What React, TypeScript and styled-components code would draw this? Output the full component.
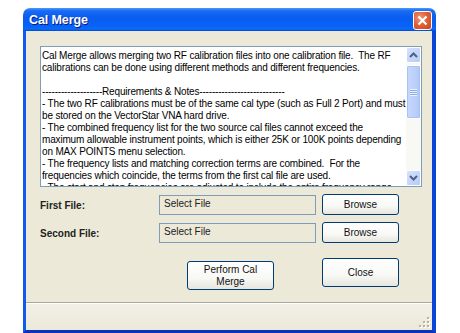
import styled, { createGlobalStyle } from "styled-components";

const GlobalStyle = createGlobalStyle`
  html, body {
    margin: 0;
    padding: 0;
    background: #ffffff;
    overflow: hidden;
  }
  body {
    font-family: Tahoma, "Liberation Sans", Arial, sans-serif;
  }
`;

const notes = [
  "Cal Merge allows merging two RF calibration files into one calibration file.  The RF",
  "calibrations can be done using different methods and different frequencies.",
  "",
  "-------------------Requirements & Notes---------------------------",
  "- The two RF calibrations must be of the same cal type (such as Full 2 Port) and must",
  "be stored on the VectorStar VNA hard drive.",
  "- The combined frequency list for the two source cal files cannot exceed the",
  "maximum allowable instrument points, which is either 25K or 100K points depending",
  "on MAX POINTS menu selection.",
  "- The frequency lists and matching correction terms are combined.  For the",
  "frequencies which coincide, the terms from the first cal file are used.",
  "- The start and stop frequencies are adjusted to include the entire frequency range",
];

const Chevron = ({ up }: { up?: boolean }) => (
  <svg width="9" height="6" viewBox="0 0 9 6">
    <path
      d={up ? "M1 5 L4.5 1.5 L8 5" : "M1 1 L4.5 4.5 L8 1"}
      fill="none"
      stroke="#4D6185"
      strokeWidth="2"
    />
  </svg>
);

const CloseGlyph = () => (
  <svg width="11" height="11" viewBox="0 0 11 11">
    <path d="M1.5 1.5 L9.5 9.5 M9.5 1.5 L1.5 9.5" stroke="#fff" strokeWidth="2.2" />
  </svg>
);

const Grip = () => (
  <svg width="11" height="11" viewBox="0 0 11 11">
    {[
      [8, 0],
      [8, 4],
      [4, 4],
      [8, 8],
      [4, 8],
      [0, 8],
    ].map(([x, y], i) => (
      <g key={i}>
        <rect x={x + 1} y={y + 1} width="2" height="2" fill="#ffffff" />
        <rect x={x} y={y} width="2" height="2" fill="#B8B4A2" />
      </g>
    ))}
  </svg>
);

const App = () => {
  return (
    <Page>
      <GlobalStyle />
      <Window>
        <TitleBar>
          <Title>Cal Merge</Title>
          <CloseBtn>
            <CloseGlyph />
          </CloseBtn>
        </TitleBar>
        <Frame>
          <Body>
            <NotesBox>
              <NotesText>
                {notes.map((line, i) => (
                  <Line key={i}>{line || " "}</Line>
                ))}
              </NotesText>
              <ScrollBar>
                <ArrowBtn>
                  <Chevron up />
                </ArrowBtn>
                <Track>
                  <Thumb>
                    <GripLines />
                  </Thumb>
                </Track>
                <ArrowBtn>
                  <Chevron />
                </ArrowBtn>
              </ScrollBar>
            </NotesBox>

            <FileGrid>
              <Label>First File:</Label>
              <FileField>Select File</FileField>
              <Button>Browse</Button>

              <Label>Second File:</Label>
              <FileField>Select File</FileField>
              <Button>Browse</Button>
            </FileGrid>

            <ActionRow>
              <Button $w={87} $h={29} $offset={3}>
                Perform Cal
                <br />
                Merge
              </Button>
              <Button $w={77} $h={29}>
                Close
              </Button>
            </ActionRow>
          </Body>
          <StatusBar>
            <Grip />
          </StatusBar>
        </Frame>
      </Window>
    </Page>
  );
};

const Page = styled.div`
  padding: 8px 0 0 23px;
`;

const Window = styled.div`
  width: 413px;
  height: 325px;
  display: flex;
  flex-direction: column;
`;

const TitleBar = styled.div`
  height: 23px;
  flex-shrink: 0;
  display: flex;
  align-items: center;
  justify-content: space-between;
  padding: 0 4px 0 6px;
  border-radius: 7px 7px 0 0;
  background: linear-gradient(
    to bottom,
    #4a9afc 0%,
    #1a6cf2 12%,
    #0a5df0 40%,
    #0862f6 80%,
    #0a6cfb 92%,
    #0048d0 100%
  );
`;

const Title = styled.div`
  font-family: "Trebuchet MS", "Liberation Sans", Arial, sans-serif;
  font-weight: bold;
  font-size: 12.5px;
  color: #ffffff;
  letter-spacing: -0.1px;
  text-shadow: 1px 1px 0 #0a1883;
  margin-top: 1px;
`;

const CloseBtn = styled.div`
  width: 19px;
  height: 19px;
  box-sizing: border-box;
  margin-top: 2px;
  border: 1px solid #ffffff;
  border-radius: 3px;
  display: flex;
  align-items: center;
  justify-content: center;
  background: radial-gradient(circle at 35% 35%, #f09b7c 0%, #e2613a 45%, #c8421d 100%);
`;

const Frame = styled.div`
  flex: 1;
  display: flex;
  flex-direction: column;
  background: #ece9d8;
  border-left: 3px solid #1459ea;
  border-right: 4px solid #0a45d8;
  border-bottom: 3px solid #0a33b8;
`;

const Body = styled.div`
  flex: 1;
  display: flex;
  flex-direction: column;
  padding: 15px 10px 0 14px;
`;

const NotesBox = styled.div`
  height: 141px;
  box-sizing: border-box;
  border: 1px solid #7f9db9;
  background: #ffffff;
  display: flex;
`;

const NotesText = styled.div`
  flex: 1;
  overflow: hidden;
  padding: 3px 0 0 1px;
  font-size: 10px;
  line-height: 12px;
  color: #000000;
`;

const Line = styled.div`
  white-space: pre;
  letter-spacing: -0.17px;
`;

const ScrollBar = styled.div`
  width: 15px;
  display: flex;
  flex-direction: column;
  background: #f8f8f4;
`;

const ArrowBtn = styled.div`
  height: 16px;
  box-sizing: border-box;
  border: 1px solid #ffffff;
  border-radius: 2px;
  background: linear-gradient(to bottom right, #d6e2fd, #b7cbf8);
  display: flex;
  align-items: center;
  justify-content: center;
`;

const Track = styled.div`
  flex: 1;
  padding-top: 2px;
`;

const Thumb = styled.div`
  height: 54px;
  box-sizing: border-box;
  border: 1px solid #ffffff;
  border-radius: 2px;
  background: linear-gradient(to right, #c8d8fc, #bcd0fa 60%, #b0c6f6);
  box-shadow: inset 0 0 0 1px #a9c1f3;
  display: flex;
  align-items: center;
  justify-content: center;
`;

const GripLines = styled.div`
  width: 7px;
  height: 7px;
  background: repeating-linear-gradient(
    to bottom,
    #eef3fe 0px,
    #eef3fe 1px,
    #8caae6 1px,
    #8caae6 2px
  );
`;

const FileGrid = styled.div`
  margin-top: 7px;
  display: grid;
  grid-template-columns: 113px 157px 77px;
  column-gap: 6px;
  row-gap: 7px;
  align-items: center;
`;

const Label = styled.div`
  font-size: 10px;
  font-weight: bold;
  color: #222222;
  padding-top: 1px;
`;

const FileField = styled.div`
  height: 20px;
  box-sizing: border-box;
  border: 1px solid #7f9db9;
  background: #ece9d8;
  font-size: 10px;
  color: #222222;
  padding: 2px 0 0 4px;
`;

const Button = styled.div<{ $w?: number; $h?: number; $offset?: number }>`
  width: ${({ $w }) => $w ?? 77}px;
  height: ${({ $h }) => $h ?? 21}px;
  margin-top: ${({ $offset }) => $offset ?? 0}px;
  box-sizing: border-box;
  border: 1px solid #003c74;
  border-radius: 3px;
  background: linear-gradient(to bottom, #ffffff 0%, #f8f8f5 60%, #e6e5de 100%);
  display: flex;
  align-items: center;
  justify-content: center;
  text-align: center;
  font-size: 10px;
  line-height: 12px;
  color: #111111;
`;

const ActionRow = styled.div`
  margin-top: 15px;
  padding-left: 147px;
  display: flex;
  align-items: flex-start;
  gap: 48px;
`;

const StatusBar = styled.div`
  height: 28px;
  flex-shrink: 0;
  box-sizing: border-box;
  border-top: 1px solid #aca899;
  box-shadow: inset 0 1px 0 #ffffff;
  background: linear-gradient(to bottom, #f2f1e8, #ece9d8);
  display: flex;
  align-items: flex-end;
  justify-content: flex-end;
  padding: 0 2px 2px 0;
`;

export default App;
